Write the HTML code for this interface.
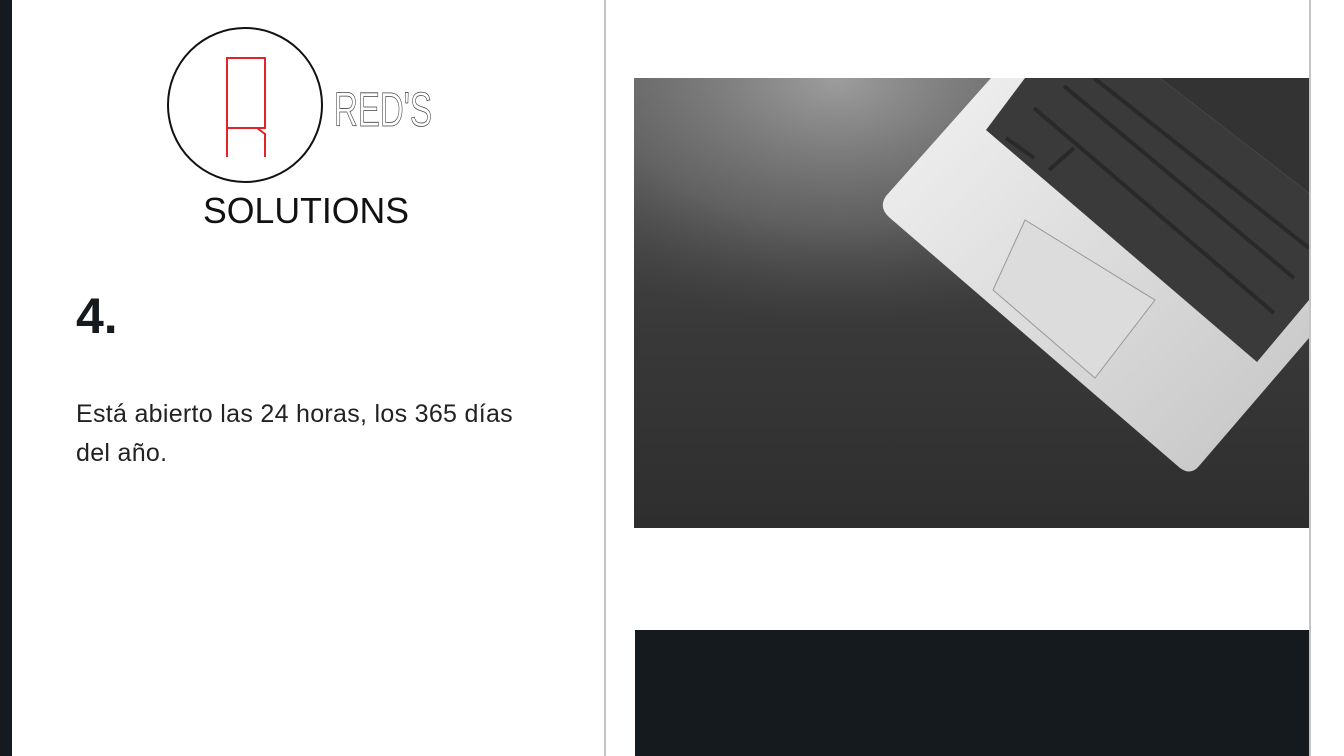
<!DOCTYPE html>
<html><head><meta charset="utf-8"><style>
html,body{margin:0;padding:0;width:1344px;height:756px;overflow:hidden;background:#fff;font-family:"Liberation Sans",sans-serif}
.strip{position:absolute;left:0;top:0;width:12px;height:756px;background:#141a1d}
.vl{position:absolute;top:0;width:2px;height:756px;background:#c4c4c4}
h1{position:absolute;left:76px;top:286px;margin:0;font-size:50px;font-weight:bold;color:#141a1d;line-height:60px}
p{position:absolute;left:76px;top:395px;margin:0;width:520px;font-size:25px;line-height:39px;color:#222;letter-spacing:0.3px;white-space:nowrap}
.dark{position:absolute;left:635px;top:630px;width:674px;height:126px;background:#141a1d}
</style></head><body>
<div class="strip"></div>
<div class="vl" style="left:604px"></div>
<div class="vl" style="left:1309px"></div>
<svg style="position:absolute;left:150px;top:20px" width="300" height="220">
<circle cx="95" cy="85" r="77" fill="none" stroke="#111" stroke-width="2"/>
<path d="M77 137 V38 H115 V108 H77 M107 108 L115 114 V137" fill="none" stroke="#e2232a" stroke-width="2"/>
<text x="184" y="106" font-family="Liberation Sans" font-size="48" fill="none" stroke="#444" stroke-width="0.8" textLength="98" lengthAdjust="spacingAndGlyphs">RED'S</text>
<text x="53" y="203" font-family="Liberation Sans" font-size="36" fill="#111" textLength="206" lengthAdjust="spacingAndGlyphs">SOLUTIONS</text>
</svg>
<h1>4.</h1>
<p>Está abierto las 24 horas, los 365 días<br>del año.</p>
<svg style="position:absolute;left:634px;top:78px" width="675" height="450">
<defs>
<linearGradient id="bg" x1="0" y1="0" x2="0" y2="1"><stop offset="0" stop-color="#555"/><stop offset="0.55" stop-color="#393939"/><stop offset="1" stop-color="#2e2e2e"/></linearGradient>
<radialGradient id="wood" cx="0.3" cy="0" r="0.55"><stop offset="0" stop-color="#aaa" stop-opacity="0.85"/><stop offset="0.6" stop-color="#888" stop-opacity="0.4"/><stop offset="1" stop-color="#555" stop-opacity="0"/></radialGradient>
<linearGradient id="al" x1="0" y1="0" x2="1" y2="1"><stop offset="0" stop-color="#f2f2f2"/><stop offset="1" stop-color="#c4c4c4"/></linearGradient>
</defs>
<rect width="675" height="450" fill="url(#bg)"/>
<rect width="675" height="450" fill="url(#wood)"/>
<path d="M357 0 H675 V260 L565 388 Q557 398 546 390 L256 140 Q244 130 252 118 Z" fill="url(#al)"/>
<path d="M391 0 L352 52 L623 284 L675 222 V115 L526 0 Z" fill="#3a3a3a"/>
<path d="M526 0 H675 V115 Z" fill="#333"/>
<path d="M372 60 L400 80 M400 30 L640 235 M430 8 L660 200 M460 0 L675 170 M415 92 L440 70" stroke="#222" stroke-width="4" opacity="0.7"/>
<path d="M359 212 L391 142 L521 222 L461 300 Z" fill="#dcdcdc" stroke="#999" stroke-width="1"/>
</svg>
<div class="dark"></div>
</body></html>
